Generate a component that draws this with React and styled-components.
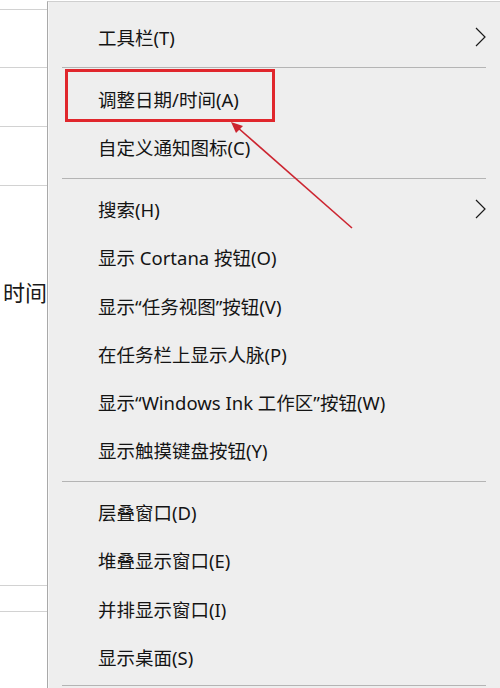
import React from "react";
import styled, { createGlobalStyle } from "styled-components";

const GlobalStyle = createGlobalStyle`
  html, body {
    margin: 0;
    padding: 0;
    background: #ffffff;
    overflow: hidden;
  }
  body {
    font-family: "Noto Sans", "Noto Sans CJK SC", sans-serif;
  }
`;

const groups = [
  [{ label: "工具栏(T)", sub: true }],
  [{ label: "调整日期/时间(A)" }, { label: "自定义通知图标(C)" }],
  [
    { label: "搜索(H)", sub: true },
    { label: "显示 Cortana 按钮(O)" },
    { label: "显示“任务视图”按钮(V)" },
    { label: "在任务栏上显示人脉(P)" },
    { label: "显示“Windows Ink 工作区”按钮(W)" },
    { label: "显示触摸键盘按钮(Y)" },
  ],
  [
    { label: "层叠窗口(D)" },
    { label: "堆叠显示窗口(E)" },
    { label: "并排显示窗口(I)" },
    { label: "显示桌面(S)" },
  ],
];

const leftRows = [
  { height: 58 },
  { height: 59 },
  { height: 59 },
  { height: 400, text: "时间" },
  { height: 26 },
  { height: 80 },
];

const Screen = styled.div`
  position: relative;
  display: flex;
  width: 500px;
  height: 688px;
  overflow: hidden;
`;

const LeftPanel = styled.div`
  width: 47px;
  flex-shrink: 0;
  padding-top: 9px;
  background: #ffffff;
  overflow: hidden;
`;

const LeftRow = styled.div`
  height: ${(p) => p.$h}px;
  border-top: 1px solid #d2d2d2;
  box-sizing: border-box;
  display: flex;
  justify-content: flex-end;
`;

const LeftText = styled.span`
  margin-top: 91px;
  font-family: "Noto Sans CJK SC", sans-serif;
  font-size: 22px;
  line-height: 28px;
  color: #1a1a1a;
  white-space: nowrap;
`;

const Menu = styled.div`
  flex: 1;
  margin-top: 1px;
  padding-top: 12px;
  background: #eeeeee;
  border-top: 1px solid #cfcfcf;
  border-left: 1px solid #a9a9a9;
  box-shadow: inset 1px 0 0 #f8f8f8;
`;

const Item = styled.div`
  height: 48.2px;
  box-sizing: border-box;
  display: flex;
  align-items: center;
  justify-content: space-between;
  padding: 0 14px 3px 50px;
  font-size: 18.5px;
  color: #141414;
  white-space: nowrap;
`;

const Separator = styled.div`
  height: 1px;
  margin: ${(p) => (p.$last ? "3px" : "5px")} 14px 8px 14px;
  background: #b4b4b4;
`;

const Chevron = () => (
  <svg width="11" height="20" viewBox="0 0 11 20">
    <polyline
      points="1,1 10,10 1,19"
      fill="none"
      stroke="#1a1a1a"
      strokeWidth="1.2"
    />
  </svg>
);

const Highlight = styled.div`
  position: absolute;
  left: 65px;
  top: 69px;
  width: 210px;
  height: 53px;
  box-sizing: border-box;
  border: 3px solid #e0262c;
  pointer-events: none;
`;

const Annotation = styled.svg`
  position: absolute;
  left: 0;
  top: 0;
  pointer-events: none;
`;

export default function App() {
  return (
    <>
      <GlobalStyle />
      <Screen>
        <LeftPanel>
          {leftRows.map((row, i) => (
            <LeftRow key={i} $h={row.height}>
              {row.text && <LeftText>{row.text}</LeftText>}
            </LeftRow>
          ))}
        </LeftPanel>
        <Menu>
          {groups.map((group, gi) => (
            <React.Fragment key={gi}>
              {group.map((item) => (
                <Item key={item.label}>
                  <span>{item.label}</span>
                  {item.sub && <Chevron />}
                </Item>
              ))}
              <Separator $last={gi === groups.length - 1} />
            </React.Fragment>
          ))}
        </Menu>
        <Highlight />
        <Annotation width="500" height="688" viewBox="0 0 500 688">
          <line
            x1="352"
            y1="228"
            x2="237"
            y2="127"
            stroke="#cc2530"
            strokeWidth="1.6"
          />
          <polygon points="231,122 243,126 236,133" fill="#cc2530" />
        </Annotation>
      </Screen>
    </>
  );
}
